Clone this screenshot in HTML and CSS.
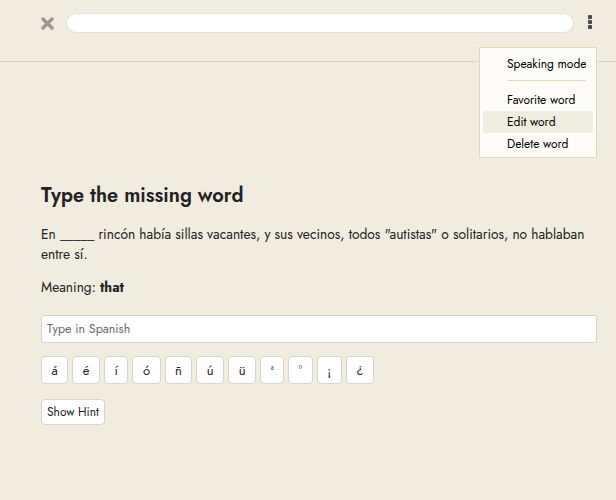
FILE: index.html
```html
<!DOCTYPE html>
<html lang="en">
<head>
<meta charset="utf-8">
<title>Type the missing word</title>
<link rel="stylesheet" href="styles.css">
</head>
<body>
<header class="topbar">
  <button class="icon-btn close-btn" aria-label="Close">
    <svg width="13" height="13" viewBox="0 0 13 13"><path d="M2 2 L11 11 M11 2 L2 11" stroke="#9a9891" stroke-width="3.4" stroke-linecap="round"/></svg>
  </button>
  <div class="progress"><div class="progress-fill"></div></div>
  <button class="icon-btn kebab" aria-label="More">
    <span class="dot"></span><span class="dot"></span><span class="dot"></span>
  </button>
  <div class="menu">
    <div class="menu-item">Speaking mode</div>
    <div class="menu-sep"></div>
    <div class="menu-item">Favorite word</div>
    <div class="menu-item active">Edit word</div>
    <div class="menu-item">Delete word</div>
  </div>
</header>
<main class="content">
  <h1 class="title">Type the missing word</h1>
  <p class="sentence">En _____ rincón había sillas vacantes, y sus vecinos, todos "autistas" o solitarios, no hablaban entre sí.</p>
  <p class="meaning">Meaning: <strong>that</strong></p>
  <input class="answer" type="text" placeholder="Type in Spanish">
  <div class="accents">
    <button class="key">á</button>
    <button class="key">é</button>
    <button class="key">í</button>
    <button class="key">ó</button>
    <button class="key">ñ</button>
    <button class="key">ú</button>
    <button class="key">ü</button>
    <button class="key">ª</button>
    <button class="key">°</button>
    <button class="key">¡</button>
    <button class="key">¿</button>
  </div>
  <button class="hint">Show Hint</button>
</main>
</body>
</html>
```
FILE: styles.css
```css
* { box-sizing: border-box; }
html, body {
  margin: 0;
  background: #f0ecdf;
  font-family: "Jost", "Lato", "Noto Sans", sans-serif;
  color: #222;
}
.topbar {
  position: relative;
  height: 62px;
  border-bottom: 1px solid #d8d3bd;
  display: flex;
  align-items: flex-start;
  padding: 14px 24px 0 41px;
  gap: 13px;
}
.icon-btn {
  background: none;
  border: 0;
  padding: 0;
  display: flex;
  cursor: pointer;
}
.close-btn { margin-top: 3px; }
.progress {
  flex: 1;
  height: 18px;
  background: #fff;
  border-radius: 9px;
  box-shadow: 0 0 0 1px #e6e2cf;
}
.progress-fill { width: 0; height: 100%; }
.kebab {
  flex-direction: column;
  gap: 1px;
  margin-top: 1px;
  margin-left: 2px;
}
.dot {
  width: 4px;
  height: 4px;
  border-radius: 1px;
  background: #4a4a48;
}
.menu {
  position: absolute;
  top: 47px;
  right: 19px;
  width: 118px;
  background: #fdfcf8;
  border: 1px solid #e2dbb1;
  padding: 5px 3px 2px;
  z-index: 2;
}
.menu-item {
  height: 22px;
  line-height: 22px;
  padding-left: 24px;
  font-size: 12px;
  color: #000;
  white-space: nowrap;
}
.menu-item.active { background: #efece0; }
.menu-sep {
  height: 1px;
  background: #e2dbb1;
  margin: 5px 7px 8px 24px;
}
.content {
  padding: 122px 19px 0 41px;
}
.title {
  margin: 0;
  font-size: 20px;
  font-weight: 600;
  line-height: 24px;
  color: #222;
}
.sentence {
  margin: 16px 0 0;
  font-size: 13.75px;
  line-height: 20px;
}
.meaning {
  margin: 13px 0 0;
  font-size: 13.75px;
  line-height: 20px;
}
.meaning strong { font-weight: 700; }
.answer {
  display: block;
  width: 100%;
  margin-top: 18px;
  height: 28px;
  border: 1px solid #d5d2c6;
  border-radius: 3px;
  background: #fff;
  padding: 0 5px;
  font-family: inherit;
  font-size: 12.5px;
  color: #222;
}
.answer::placeholder { color: #6a6a6a; }
.accents {
  display: flex;
  gap: 4px;
  margin-top: 13px;
}
.key, .hint {
  background: #fff;
  border: 1px solid #d6d4cb;
  border-radius: 4px;
  font-family: inherit;
  color: #222;
  cursor: pointer;
}
.key {
  height: 28px;
  min-width: 24px;
  padding: 0 9.5px;
  font-size: 13px;
}
.hint {
  display: block;
  margin-top: 15px;
  height: 26px;
  padding: 0 5px;
  font-size: 12px;
}
```
